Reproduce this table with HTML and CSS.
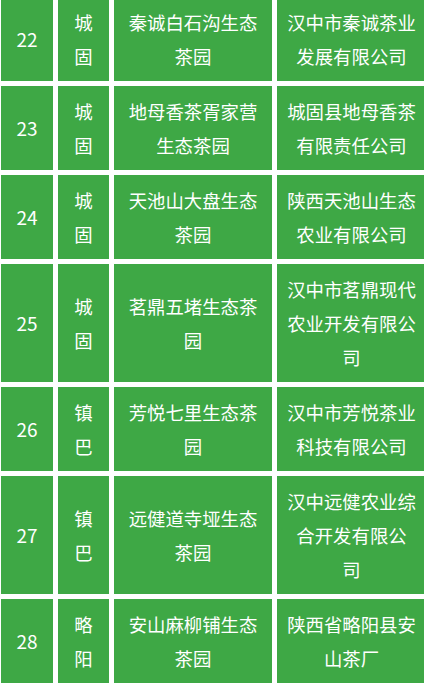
FILE: index.html
```
<!DOCTYPE html>
<html lang="zh-CN">
<head>
<meta charset="utf-8">
<link rel="stylesheet" href="styles.css">
</head>
<body>
<div class="table">
  <div class="cell num">22</div><div class="cell county">城固</div><div class="cell">秦诚白石沟生态茶园</div><div class="cell">汉中市秦诚茶业发展有限公司</div>
  <div class="cell num">23</div><div class="cell county">城固</div><div class="cell">地母香茶胥家营生态茶园</div><div class="cell">城固县地母香茶有限责任公司</div>
  <div class="cell num">24</div><div class="cell county">城固</div><div class="cell">天池山大盘生态茶园</div><div class="cell">陕西天池山生态农业有限公司</div>
  <div class="cell num">25</div><div class="cell county">城固</div><div class="cell">茗鼎五堵生态茶园</div><div class="cell">汉中市茗鼎现代农业开发有限公司</div>
  <div class="cell num">26</div><div class="cell county">镇巴</div><div class="cell">芳悦七里生态茶园</div><div class="cell">汉中市芳悦茶业科技有限公司</div>
  <div class="cell num">27</div><div class="cell county">镇巴</div><div class="cell">远健道寺垭生态茶园</div><div class="cell">汉中远健农业综<br>合开发有限公<br>司</div>
  <div class="cell num">28</div><div class="cell county">略阳</div><div class="cell">安山麻柳铺生态茶园</div><div class="cell">陕西省略阳县安山茶厂</div>
</div>
</body>
</html>
```
FILE: styles.css
```
html, body {
  margin: 0;
  padding: 0;
  background: #ffffff;
  overflow: hidden;
}
body {
  width: 424px;
  height: 685px;
  font-family: "Noto Sans CJK SC", "Microsoft YaHei", sans-serif;
}
.table {
  display: grid;
  grid-template-columns: 52px 51px 158px 149px;
  column-gap: 5px;
  row-gap: 5px;
  margin: -3px 0 0 1px;
  width: 430px;
}
.cell {
  background: #3ea845;
  color: #ffffff;
  font-size: 18.4px;
  line-height: 34px;
  text-align: center;
  display: flex;
  align-items: center;
  justify-content: center;
  padding: 8px 10px;
  min-height: 68px;
  word-break: break-all;
}
.num {
  padding: 8px 4px;
  font-size: 19px;
}
.county {
  padding: 8px 12px;
}
.cell:nth-child(4n) {
  padding: 8px 8px;
}
```
